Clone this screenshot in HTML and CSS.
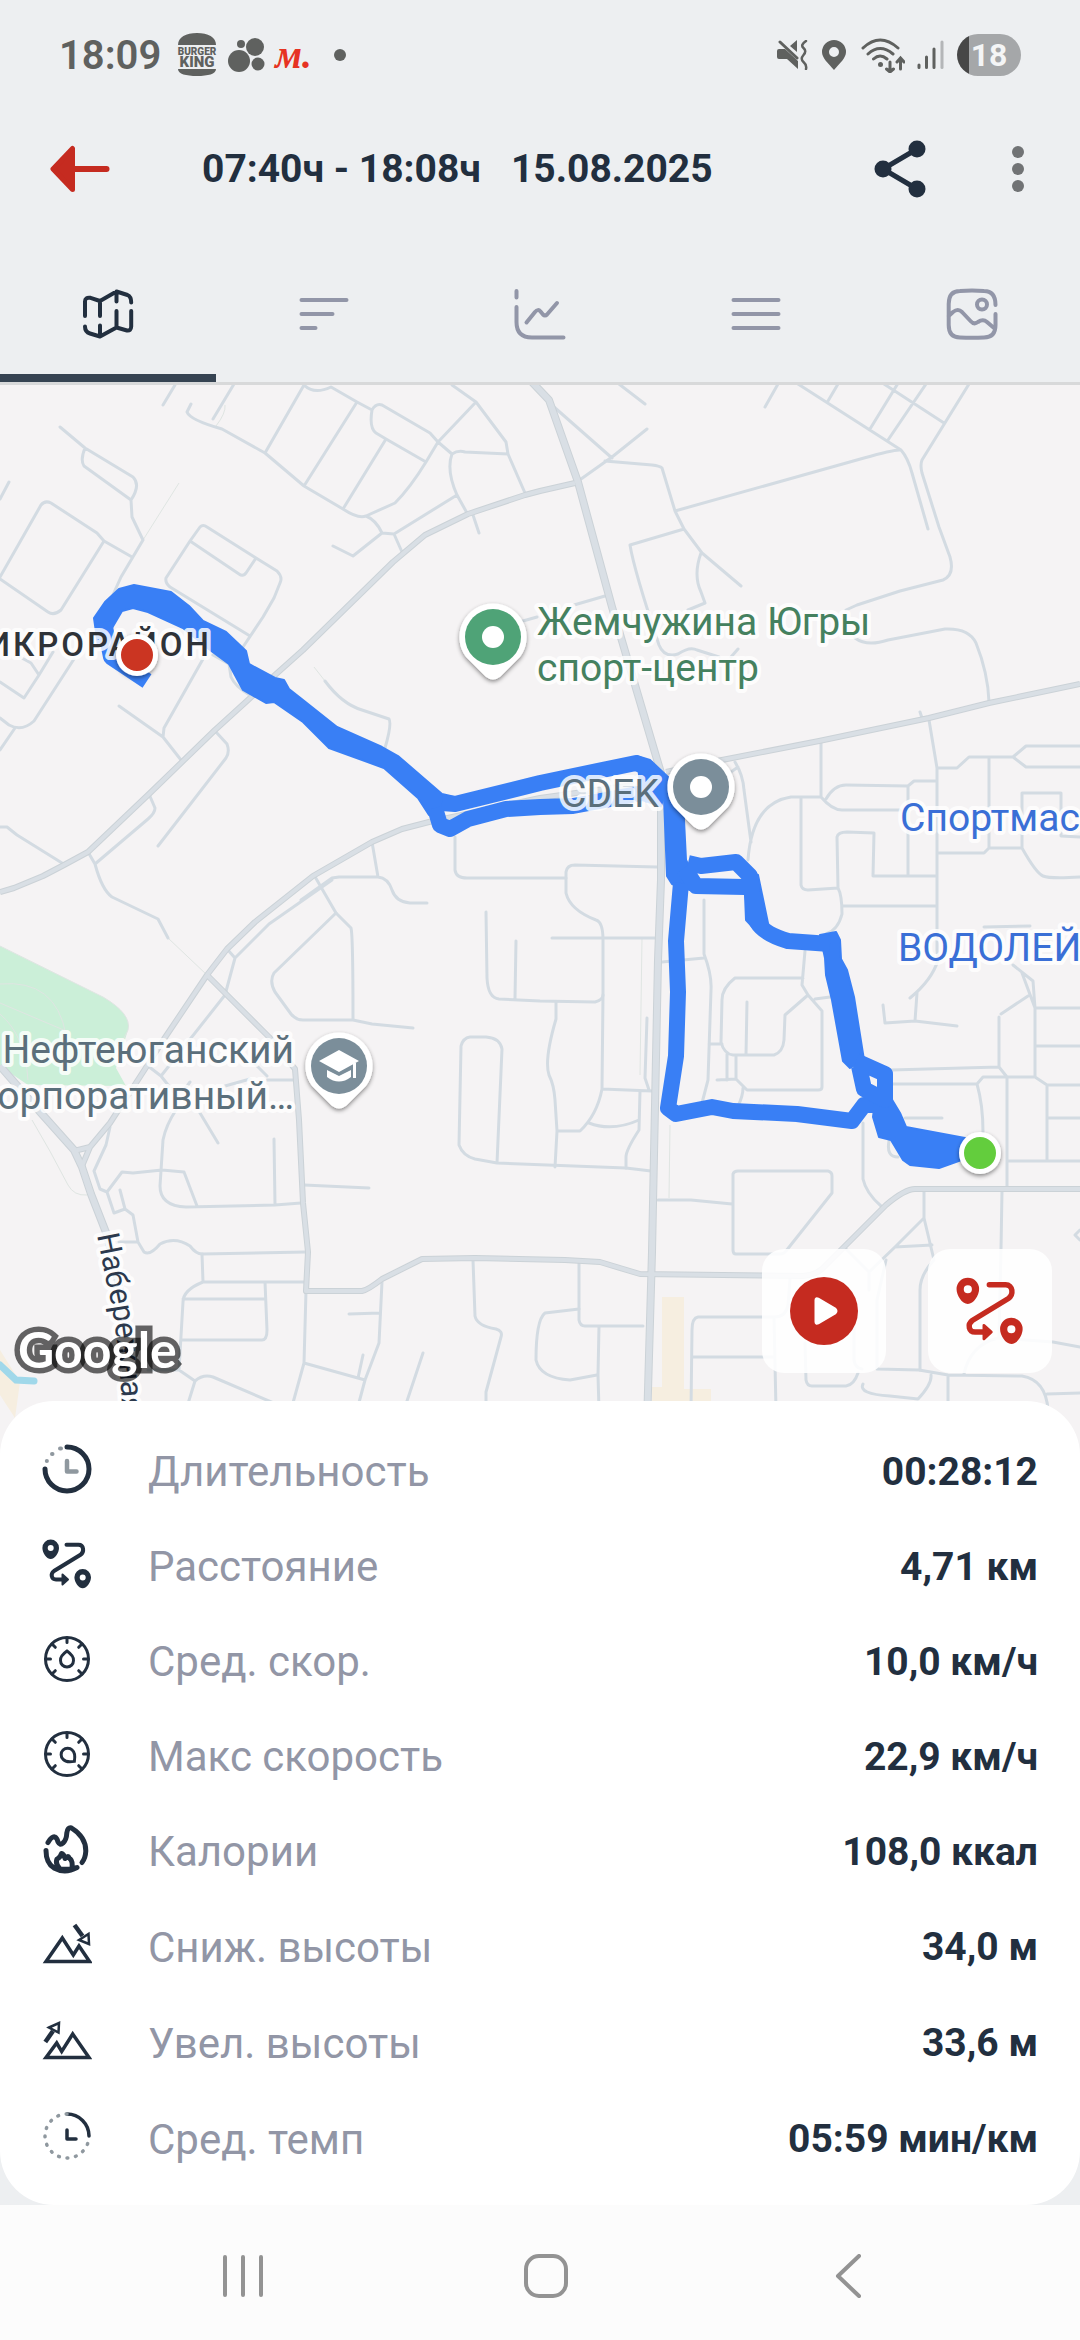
FILE: index.html
```html
<!DOCTYPE html>
<html lang="ru">
<head>
    <meta charset="UTF-8">
    <meta name="viewport" content="width=device-width, initial-scale=1">
    <title>Тренировка 15.08.2025</title>
    <link rel="stylesheet" href="styles.css">
</head>
<body>
    <svg class="sprite" aria-hidden="true">
        <symbol id="icon-route" viewBox="0 0 50 50">
            <path fill="currentColor" fill-rule="evenodd" d="M8.700 0.600a8.300 8.300 0 0 1 8.300 8.300c0 4.600-4 11-8.300 11S0.400 13.500 0.400 8.900A8.300 8.300 0 0 1 8.700 0.600zM8.700 6a3 3 0 1 0 0 6 3 3 0 0 0 0-6z"/>
            <path fill="currentColor" fill-rule="evenodd" d="M40.700 30a8.300 8.300 0 0 1 8.300 8.300c0 4.600-4 11-8.300 11s-8.300-6.400-8.300-11A8.300 8.300 0 0 1 40.700 30zM40.700 35.400a3 3 0 1 0 0 6 3 3 0 0 0 0-6z"/>
            <path fill="none" stroke="currentColor" stroke-width="4" stroke-linecap="round" d="M24.500 5.700H36.500C42 5.700 42.500 13 38.500 15.800L12 32C8 35 9.500 40.500 14 40.500H22"/>
            <path fill="currentColor" stroke="currentColor" stroke-width="2" stroke-linejoin="round" d="M20.500 35.500L26 40.500L20.500 45.500z"/>
        </symbol>
        <symbol id="icon-gauge" viewBox="0 0 50 50">
            <g fill="none" stroke="currentColor" stroke-width="3" stroke-linecap="round">
                <circle cx="25" cy="25" r="21.500"/>
                <path d="M25 4V8.500M4 25H8.500M46 25H41.500M10 10L13.300 13.300M40 10L36.700 13.300M10 40L13.300 36.700M40 40L36.700 36.700"/>
            </g>
        </symbol>
    </svg>

    <header class="status-bar">
        <div class="status-left">
            <time class="clock">18:09</time>
            <svg width="40" height="44" viewBox="0 0 40 44" fill="#5f615f" aria-hidden="true">
                <path d="M1 12C1 4 9 0 20 0s19 4 19 12z"/>
                <path d="M1 36H39C39 41 31 43 20 43S1 41 1 36z"/>
                <text class="bk" x="20" y="22" font-size="10">BURGER</text>
                <text class="bk" x="20" y="34" font-size="15">KING</text>
            </svg>
            <svg width="38" height="38" viewBox="0 0 38 38" fill="#5f615f" aria-hidden="true">
                <circle cx="14" cy="8" r="4"/>
                <circle cx="28" cy="11" r="9"/>
                <circle cx="12" cy="25" r="11"/>
                <circle cx="31" cy="28" r="6.500"/>
            </svg>
            <span class="m-logo">м.</span>
            <span class="dot"></span>
        </div>
        <div class="status-right">
            <svg width="32" height="30" viewBox="0 0 32 30" fill="#5f615f" aria-hidden="true">
                <path d="M0 11Q0 9 2 9H8L21 21V29L10 19H2Q0 19 0 17zM13 6L20 0V12z"/>
                <path d="M3 2L20 18" stroke="#5f615f" stroke-width="3" stroke-linecap="round"/>
                <path d="M29 1Q23 5 26.500 8T26.500 15T26.500 22T29 29" fill="none" stroke="#5f615f" stroke-width="2.500" stroke-linecap="round"/>
            </svg>
            <svg width="28" height="30" viewBox="0 0 28 30" aria-hidden="true">
                <path fill="#5f615f" fill-rule="evenodd" d="M13 0a12 12 0 0 1 12 12c0 6-6 11-12 18C7 23 1 18 1 12A12 12 0 0 1 13 0zM13 7a5 5 0 1 0 0 10 5 5 0 0 0 0-10z"/>
            </svg>
            <svg width="44" height="36" viewBox="0 0 44 36" fill="none" stroke="#5f615f" stroke-width="3" stroke-linecap="round" aria-hidden="true">
                <path d="M2 11Q19 -5 37 11M7 17Q19 6 32 17M12.500 22Q19 16 26 22M29 25V35M25.500 32L29 35L32.500 32M39.500 32V22M36 25L39.500 21L43 25"/>
                <circle cx="19.500" cy="27.500" r="2.500" fill="#5f615f" stroke="none"/>
            </svg>
            <svg width="28" height="30" viewBox="0 0 28 30" stroke="#5f615f" stroke-width="3" stroke-linecap="round" aria-hidden="true">
                <path d="M2 25V27.500M9.500 17V27.500M17 9V27.500"/>
                <path d="M25 2V27.500" stroke="#b4b6b8"/>
            </svg>
            <span class="battery">18</span>
        </div>
    </header>

    <div class="toolbar">
        <button class="icon-btn back" aria-label="Назад">
            <svg width="60" height="48" viewBox="0 0 60 48" aria-hidden="true">
                <path d="M24 24H56.500" stroke="#c52b20" stroke-width="6" stroke-linecap="round"/>
                <path d="M22.500 3.500V44.500L3 24z" fill="#c52b20" stroke="#c52b20" stroke-width="5" stroke-linejoin="round"/>
            </svg>
        </button>
        <h1 class="title"><span>07:40ч - 18:08ч</span><span>15.08.2025</span></h1>
        <button class="icon-btn share" aria-label="Поделиться">
            <svg width="52" height="60" viewBox="0 0 52 60" fill="#222f3f" aria-hidden="true">
                <path d="M43 10L9 30L43 50" fill="none" stroke="#222f3f" stroke-width="5"/>
                <circle cx="43" cy="10" r="8.500"/>
                <circle cx="9" cy="30" r="8.500"/>
                <circle cx="43" cy="50" r="8.500"/>
            </svg>
        </button>
        <button class="icon-btn more" aria-label="Ещё">
            <svg width="12" height="48" viewBox="0 0 12 48" fill="#717375" aria-hidden="true">
                <circle cx="6" cy="7" r="6"/>
                <circle cx="6" cy="24" r="6"/>
                <circle cx="6" cy="41" r="6"/>
            </svg>
        </button>
    </div>

    <nav class="tabs">
        <button class="tab active" aria-label="Карта">
            <svg viewBox="0 0 52 52" aria-hidden="true">
                <path d="M3 28V13.500Q3 9 8.500 9.800L18 13L34.500 3.500L45.500 7Q49.200 8.500 49.200 14.500M49.200 23V38.500Q49 43 45 42.500L34.500 39.500L18 48.500L8 45.500Q3 44 3 38.500M18 13V28M34.500 3.500V13.500M18 37.500V48.500M34.500 23V39.500"/>
            </svg>
        </button>
        <button class="tab" aria-label="Круги">
            <svg viewBox="0 0 52 52" aria-hidden="true"><path d="M3.500 12H48.500M3.500 26H34.500M3.500 40H17.500"/></svg>
        </button>
        <button class="tab" aria-label="Графики">
            <svg viewBox="0 0 52 52" aria-hidden="true"><path d="M2.500 3V9.500M2.500 19V34Q2.500 49.500 18 49.500H49.500M12.500 34.500L21 24Q24 20.500 26.500 23.500L29 26.500Q31 28.500 33 26.500L43 15"/></svg>
        </button>
        <button class="tab" aria-label="Список">
            <svg viewBox="0 0 52 52" aria-hidden="true"><path d="M3.500 12H48.500M3.500 26H48.500M3.500 40H48.500"/></svg>
        </button>
        <button class="tab" aria-label="Фото">
            <svg viewBox="0 0 52 52" aria-hidden="true">
                <path d="M49.500 17Q49.500 3 38 3Q26 2 14 3Q2.700 3 2.700 16V37Q2.700 49.500 14 49.500Q26 50 38 49.500Q49.500 49.500 49.500 37V26M2.700 28L7 24Q12 20 16 24L24.500 33Q28 37 32 34Q37 30.500 41 34L48 40"/>
                <circle cx="36" cy="16.500" r="5"/>
            </svg>
        </button>
    </nav>

    <main class="content">
        <section class="map" aria-label="Маршрут на карте">
            <svg class="map-canvas" viewBox="0 385 1080 1070" preserveAspectRatio="xMidYMin slice">
                <defs>
                    <filter id="drop" x="-30%" y="-30%" width="160%" height="160%">
                        <feDropShadow dx="0" dy="2" stdDeviation="2" flood-color="#000" flood-opacity="0.45"/>
                    </filter>
                    <path id="embankment" d="M97 1235L106 1280Q121 1340 123 1440"/>
                    <path id="pin" d="M0 -33.500A33.500 33.500 0 0 1 27 20L7.500 39.500Q0 45.500 -7.500 39.500L-27 20A33.500 33.500 0 0 1 0 -33.500z"/>
                </defs>

                <!-- Парк, вода, застройка -->
                <path class="park" d="M0 946L103 997Q132 1014 128 1030L116 1068L126 1086L28 1085L0 1066z"/>
                <path class="sand" d="M0 1350L20 1382L15 1418L0 1395zM662 1297H684V1389H711V1460H652V1387H662z"/>
                <path class="water" d="M0 1365L16 1380L34 1381"/>
                <path class="trail" d="M325 681L314 667M143 540L179 483M216 426Q226 413 225 405M0 946L103 997Q132 1014 128 1030L120 1046M0 984Q56 979 66 1035M0 1003L66 1031M0 1014Q25 1035 28 1080M168 938L207 975M32 1120Q50 1150 68 1185Q74 1196 87 1195M642 938L640 1075M670 1125L669 1198"/>

                <!-- Мелкие улицы -->
                <path class="street" d="M175 385L163 405M234 384L213 419M191 404L187 412Q190 420 222 429L265 453L304 486L343 509Q358 519 366 516L395 503Q410 488 426 462L438 442L476 402M304 385L265 453M304 385Q314 395 331 387L357 402L372 410M357 402L304 486M372 410Q376 403 382 405L430 433L438 442L452 454Q458 450 465 452L508 454M372 410Q369 428 376 433L386 439L426 462M386 439L343 509M452 385L476 402L506 442L508 454L525 493M452 454Q446 470 457 495L467 513M473 515L479 533M457 495L394 534L382 533L353 556L333 546M366 516Q376 520 382 533M394 534L402 552"/>
                <path class="street" d="M60 427L85 448L133 477Q141 485 131 500L132 517L143 540L121 577L112 597M85 448Q80 460 84 466L131 500M9 482L0 499M0 577L41 505Q45 500 51 503L97 533L104 541L61 610Q54 616 48 612L0 579M104 541L132 557M190 541L200 527Q203 524 207 527L256 558L277 571Q283 577 280 583L274 598L263 617L243 647M190 541L166 578Q165 583 170 587L250 636M190 541L239 574Q243 577 246 573L256 558"/>
                <path class="street" d="M20 657L31 663L39 675L53 652M39 675L24 698L0 682M74 659L34 721Q22 732 9 725L0 718M15 728L0 750M119 706L163 737L181 760M203 659L164 728L163 737M213 655L229 664L231 677Q235 686 248 694M216 732L227 744Q230 752 226 758L158 846M149 794L155 808Q155 813 148 819L95 864M88 852L95 864Q102 890 112 897L158 919L168 938M0 827L7 827L17 835L62 863M325 681Q342 704 362 710L389 719Q392 724 385 748M372 842L378 877M455 837V870Q456 878 467 878H566M301 900L332 878L339 877H378Q388 878 392 890Q396 902 410 903H427M314 875L336 913L351 928Q353 935 353 1019M523 621L537 617"/>
                <path class="street" d="M332 880L269 924L235 958L225 995L161 1076L148 1066M161 1076L180 1100M227 949L235 958M336 913L274 973Q269 981 275 992L291 1014Q296 1020 303 1020H353L372 1024L413 1028M486 912L487 978Q488 998 499 999L540 1001L595 1002Q603 1000 603 995V940Q603 922 596 920Q570 910 566 893V872Q567 865 575 865L657 867M516 941L515 998M461 1046Q463 1038 470 1037H486Q500 1038 502 1049L497 1163M461 1046L459 1145Q463 1156 475 1159L497 1163L626 1168L651 1171M304 1185L369 1188M274 1139L275 1205M301 1203L275 1205L186 1207Q160 1206 160 1186L163 1140Q166 1125 176 1110M107 1192L122 1172L133 1173L162 1170L184 1172L197 1206M110 1127L106 1145L94 1171L100 1189L107 1192L114 1213L125 1209L120 1190M125 1209L133 1215L138 1242L144 1252Q150 1256 160 1244Q175 1236 190 1246Q196 1254 202 1254L306 1252M119 1242L138 1242"/>
                <path class="street" d="M202 1254L203 1282Q183 1290 183 1302L179 1370M203 1282H305M183 1299H265M265 1282L267 1330Q267 1340 262 1340H181M148 1370H179L195 1381L186 1410M195 1381Q203 1374 213 1377L290 1410M306 1291L304 1363L291 1410M304 1363L365 1380M382 1282L379 1343L365 1380L357 1410M363 1355L358 1378M349 1314L380 1313M423 1353L404 1410M473 1260L475 1316Q477 1326 496 1329Q503 1331 501 1337L486 1392V1410M579 1309L545 1313Q536 1320 536 1360Q540 1378 570 1380L597 1375M267 1080H293M225 1086L250 1079M255 1064L267 1076M200 1113L218 1143M190 1082L184 1090"/>
                <path class="street" d="M619 384L645 404M554 407L612 458M581 479L612 457L647 429M605 461L652 465Q660 466 662 468L675 511L684 529L702 553L741 586M675 511L864 458Q895 449 901 450Q908 458 912 473L928 529M798 384L901 450M828 401L838 384M778 384L765 407M870 429L900 380M888 440L926 384M884 384L944 423M969 384L922 460Q920 465 922 473L939 527L950 557Q955 575 943 580L900 591L857 605L846 610M684 529L630 545Q634 570 659 645Q664 658 678 654Q690 646 697 650L719 657M701 553Q693 575 701 592L705 603L688 610M731 657L738 649M574 605L605 596M855 638Q867 647 888 640L945 629Q969 628 976 643Q988 673 989 702M920 712L922 718"/>
                <path class="street" d="M929 720L937 768V950L938 960Q932 980 910 998M937 768H957L969 757H1013L1026 746H1080M1013 757L1026 767H1080M989 757V848L984 853H937M989 848H1022V793H1061V836L1080 837M1022 848Q1036 873 1043 876Q1050 879 1080 877M821 743V797H791Q752 803 748 860M735 762Q743 775 744 790L751 842M731 772L738 767M826 799Q834 785 846 785L908 786L914 781H937M821 797Q832 810 842 810H900M908 786V876M801 797V885Q802 890 808 890L838 888L837 837Q838 832 847 832L874 833L873 876H937M838 888Q842 895 842 914Q838 930 826 934M842 906H937"/>
                <path class="street" d="M552 938H657M704 900V954Q712 975 711 990L708 1080L702 1103M662 962L704 958M803 978H735Q722 988 722 1000L721 1042Q724 1054 733 1055H774Q783 1052 784 1040L785 1015L808 995L802 985L805 951M747 1002L746 1055M808 995L822 1011V1087Q822 1090 818 1090H747L736 1079L717 1080M736 1055V1079M727 1054V1080M709 1044H722M743 1088Q743 1096 738 1106M815 999L830 997M647 1018L645 1078L649 1090M603 995L602 1089L652 1091M602 1089Q597 1115 580 1131H557M556 1002V1019Q544 1060 549 1075Q554 1085 555 1100L557 1131L555 1167M640 1091L639 1130Q626 1150 626 1157V1168M589 1123Q612 1132 639 1120M658 1200H691L732 1204M733 1250V1174Q734 1171 738 1171H828Q832 1172 832 1176V1193L786 1251Q784 1254 780 1254H736Q733 1254 733 1250z"/>
                <path class="street" d="M863 1123V1179Q866 1193 881 1206M889 1141Q886 1157 898 1157M905 1118H942M891 1084H977Q983 1105 983 1132M891 1070L999 1067L1007 1077V1186M977 1084L983 1077H1035L1047 1085H1080M1047 1085V1161M1007 1161H1080M1047 1118H1080M999 1017V1067M1035 1077V1008L1033 981L1013 965M1035 1008H1080M1035 1046H1080M1035 1008L1022 973M1001 1014L1028 996M984 927L1030 926M883 1005L885 1023L915 1021L957 1026M917 993L915 1021M1002 1191L1001 1249L999 1338M924 1191V1218L895 1247L869 1272V1290M924 1218L934 1260Q920 1275 920 1290V1370M895 1247L932 1245M846 1249L869 1272M579 1262V1320Q580 1326 585 1326H643M599 1326L598 1375L599 1410M790 1279L788 1305Q786 1317 774 1317H698Q692 1318 692 1330L691 1410M692 1357H774M774 1317L776 1410"/>
                <path class="street" d="M805 1343L806 1380Q807 1386 812 1386H846Q854 1385 858 1373M886 1260L877 1300V1369M854 1320V1360Q855 1368 862 1369M877 1369L919 1370L948 1375L1022 1376Q1046 1380 1048 1410M948 1375V1410M931 1375Q932 1384 918 1399L890 1396Q858 1394 863 1384M1047 1394L1080 1393M964 1374Q970 1345 998 1338L1053 1342L1080 1347M1080 1240L1075 1235L1080 1230"/>

                <!-- Магистрали: сначала кант, поверх заливка -->
                <g class="road-edge">
                    <path id="ring" d="M575 483L540 491L525 495L468 514L425 535L393 562L303 650L275 675L248 700L215 730L149 794L88 852L64 865L43 876L14 888L0 892"/>
                    <path id="south" d="M655 782L540 798L429 822L402 829L372 842L313 876L255 922L227 949L207 975L164 1039L145 1069L110 1123L90 1147L74 1151M90 1147L82 1166M207 975L269 1037L295 1069L299 1120L303 1203L308 1252L306 1291H362Q368 1290 382 1279L422 1259L475 1258L565 1260L600 1262L640 1274L803 1276Q815 1275 822 1269L886 1205Q905 1189 915 1189H1080"/>
                    <path id="east" d="M666 772L722 760L819 741L929 718L989 703L1080 684"/>
                </g>
                <path class="road-edge wide" d="M530 380L549 400L578 482L612 607L661 773V880L658 960L652 1252L646 1460M0 1066L41 1113L74 1150L82 1167L91 1194L107 1235L120 1290L130 1350L135 1460"/>
                <g class="road">
                    <use href="#ring"/>
                    <use href="#south"/>
                    <use href="#east"/>
                </g>
                <path class="road wide" d="M530 380L549 400L578 482L612 607L661 773V880L658 960L652 1252L646 1460M0 1066L41 1113L74 1150L82 1167L91 1194L107 1235L120 1290L130 1350L135 1460"/>

                <!-- Маршрут -->
                <g class="track">
                    <path class="track-fill" d="M94 618L105 602L119 589L134 585L171 592L189 606L203 621L226 632L246 651L249 664L275 678L284 680L289 689L303 700L337 727L382 747L398 756L442 794L455 797L442 812L429 815L418 798L384 768L329 748L303 722L274 702L266 703L243 690L229 664L210 650L183 628L148 612L133 608L122 611L112 628L110 646H98z"/>
                    <path class="track-fill" d="M637 756L650 760L668 777L683 800L686 860L696 880L690 890L672 884L667 876L664 798L640 784zM820 935L836 932L840 940L841 959L847 970L854 997L864 1060L850 1068L843 1061L832 1000L826 975L825 958zM750 872L758 875L769 928L760 935L746 920L745 895zM876 1094L891 1098L900 1113L906 1127L965 1138L981 1153L939 1168L910 1165L903 1160L891 1140L879 1137L873 1117z"/>
                    <path d="M104 622L111 657L147 681M442 803L455 804L540 783L636 763L650 769M435 808L440 825L450 829L468 819L506 809L540 807L573 806L643 793L664 800"/>
                    <path d="M688 863L701 866L736 862L750 876L753 900L757 922Q764 934 788 941L830 944M684 868L696 886L745 887M681 883L676 941L678 992L676 1056L668 1108L676 1114L712 1107L733 1111L797 1114L852 1121L864 1105H884"/>
                    <path class="thin" d="M856 1061L885 1074V1100L864 1089L859 1066"/>
                </g>

                <text class="district" x="212" y="656">ИКРОРАЙОН</text>
                <text class="poi green" x="537" y="635">Жемчужина Югры</text>
                <text class="poi green" x="537" y="681">спорт-центр</text>
                <text class="poi gray" x="561" y="807">CDEK</text>
                <text class="poi blue" x="900" y="831">Спортмас</text>
                <text class="poi blue" x="898" y="961">ВОДОЛЕЙ</text>
                <text class="poi gray end" x="294" y="1063">Нефтеюганский</text>
                <text class="poi gray end" x="294" y="1109">орпоративный…</text>
                <text class="street-name"><textPath href="#embankment">Набережная</textPath></text>

                <!-- Метки мест -->
                <g transform="translate(493 637)">
                    <use href="#pin" fill="#fff" filter="url(#drop)"/>
                    <circle r="28" fill="#4fa377"/>
                    <circle r="11" fill="#fff"/>
                </g>
                <g transform="translate(701 787)">
                    <use href="#pin" fill="#fff" filter="url(#drop)"/>
                    <circle r="28" fill="#7b8e9a"/>
                    <circle r="11" fill="#fff"/>
                </g>
                <g transform="translate(339 1066)">
                    <use href="#pin" fill="#fff" filter="url(#drop)"/>
                    <circle r="28" fill="#7b8e9a"/>
                    <path fill="#fff" d="M0 -16L20 -5L0 6L-20 -5zM-12 4L0 10L12 4V11Q0 20 -12 11zM14 -3H17V12H14z"/>
                </g>

                <!-- Старт и финиш -->
                <g stroke="#fff" stroke-width="5">
                    <circle cx="137" cy="655" r="18.500" fill="#cb3420" filter="url(#drop)"/>
                    <circle cx="980" cy="1153" r="18.500" fill="#64cd3c" filter="url(#drop)"/>
                </g>

                <text class="google" x="18" y="1368">Google</text>
            </svg>

            <div class="map-actions">
                <button class="fab" aria-label="Воспроизвести">
                    <svg viewBox="0 0 68 68" aria-hidden="true">
                        <circle cx="34" cy="34" r="34" fill="#c52b20"/>
                        <path d="M26 23V45Q26 47 28 46L45 36Q47 34 45 32L28 22Q26 21 26 23z" fill="#fff" stroke="#fff" stroke-width="3" stroke-linejoin="round"/>
                    </svg>
                </button>
                <button class="fab" aria-label="Маршрут">
                    <svg viewBox="0 0 50 50" aria-hidden="true"><use href="#icon-route"/></svg>
                </button>
            </div>
        </section>

        <dl class="stats">
            <div class="stat">
                <dt>
                    <svg viewBox="0 0 50 50" fill="none" stroke-linecap="round" stroke-linejoin="round" aria-hidden="true">
                        <path d="M25 3A22 22 0 1 1 3 25" stroke="currentColor" stroke-width="5"/>
                        <path d="M25 17V27.500H34.500" stroke="#8f989f" stroke-width="4.500"/>
                        <path d="M18 4.500h1M10 10h.5M4.800 17h.1" stroke="#8f989f" stroke-width="4"/>
                    </svg>
                    Длительность
                </dt>
                <dd>00:28:12</dd>
            </div>
            <div class="stat">
                <dt>
                    <svg viewBox="0 0 50 50" aria-hidden="true"><use href="#icon-route"/></svg>
                    Расстояние
                </dt>
                <dd>4,71 км</dd>
            </div>
            <div class="stat">
                <dt>
                    <svg viewBox="0 0 50 50" aria-hidden="true">
                        <use href="#icon-gauge"/>
                        <path d="M25 17Q18 22 18.500 26.500A6.500 6.500 0 0 0 31.500 26.500Q32 22 25 17z" fill="none" stroke="currentColor" stroke-width="3"/>
                    </svg>
                    Сред. скор.
                </dt>
                <dd>10,0 км/ч</dd>
            </div>
            <div class="stat">
                <dt>
                    <svg viewBox="0 0 50 50" aria-hidden="true">
                        <use href="#icon-gauge"/>
                        <path transform="rotate(135 26 26)" d="M26 17Q19 22 19.500 26.500A6.500 6.500 0 0 0 32.500 26.500Q33 22 26 17z" fill="none" stroke="currentColor" stroke-width="3"/>
                    </svg>
                    Макс скорость
                </dt>
                <dd>22,9 км/ч</dd>
            </div>
            <div class="stat">
                <dt>
                    <svg viewBox="0 0 50 50" fill="none" stroke="currentColor" stroke-width="5" stroke-linecap="round" stroke-linejoin="round" aria-hidden="true">
                        <path d="M6 18.500Q10 12 13 13Q15 14 16 18Q18 22 21 19Q24.500 16 24.800 9Q25.500 3 29.500 4Q44 13 43.800 27Q43.500 34 40 38.500"/>
                        <path d="M4 26.500Q4 39 12 44Q23 50 35 43.500Q28 46 18 45Q13 40 15 35Q18 34 19.500 29.500Q22 30 23 34.500Q26 31 27 34Q31 36 30 44"/>
                    </svg>
                    Калории
                </dt>
                <dd>108,0 ккал</dd>
            </div>
            <div class="stat tall">
                <dt>
                    <svg viewBox="0 0 50 50" fill="none" stroke="currentColor" stroke-width="3.500" aria-hidden="true">
                        <path d="M4 42.500L20.300 19L31.300 36L37 27L47.500 42.500z"/>
                        <path d="M32.500 6L40.500 17" stroke-width="4.500"/>
                        <path d="M37 21L46.500 15L47 25z" stroke-width="2.500"/>
                    </svg>
                    Сниж. высоты
                </dt>
                <dd>34,0 м</dd>
            </div>
            <div class="stat tall">
                <dt>
                    <svg viewBox="0 0 50 50" fill="none" stroke="currentColor" stroke-width="3.500" aria-hidden="true">
                        <path d="M4 42.500L14.700 28L19.700 36.500L30.700 19L47 42.500z"/>
                        <path d="M3.300 27L11 16" stroke-width="4.500"/>
                        <path d="M7 12.500L17 8L16.500 17.500z" stroke-width="2.500"/>
                    </svg>
                    Увел. высоты
                </dt>
                <dd>33,6 м</dd>
            </div>
            <div class="stat tall">
                <dt>
                    <svg viewBox="0 0 50 50" fill="none" stroke-linecap="round" stroke-linejoin="round" aria-hidden="true">
                        <path d="M25 3A22 22 0 0 1 47 25" stroke="currentColor" stroke-width="3.500"/>
                        <path d="M47 25A22 22 0 1 1 25 3" pathLength="120" stroke="#8f989f" stroke-width="3.500" stroke-dasharray="1 9" stroke-dashoffset="-9"/>
                        <path d="M25 19V28H34" stroke="currentColor" stroke-width="3.500"/>
                    </svg>
                    Сред. темп
                </dt>
                <dd>05:59 мин/км</dd>
            </div>
        </dl>
    </main>

    <footer class="nav-bar">
        <button class="icon-btn" aria-label="Недавние">
            <svg width="44" height="44" viewBox="0 0 44 44" aria-hidden="true"><path d="M4 3V41M22 3V41M40 3V41"/></svg>
        </button>
        <button class="icon-btn" aria-label="Домой">
            <svg width="44" height="44" viewBox="0 0 44 44" aria-hidden="true"><rect x="2" y="2" width="40" height="40" rx="13"/></svg>
        </button>
        <button class="icon-btn" aria-label="Назад">
            <svg width="44" height="44" viewBox="0 0 44 44" aria-hidden="true"><path d="M32 2L11 22L32 42"/></svg>
        </button>
    </footer>
</body>
</html>
```

FILE: styles.css
```css
* {
    box-sizing: border-box;
}
html, body {
    margin: 0;
    padding: 0;
}
body {
    min-height: 100vh;
    display: flex;
    flex-direction: column;
    background: #edeff1;
    color: #222f3f;
    font-family: Roboto, "Liberation Sans", sans-serif;
}
button {
    margin: 0;
    padding: 0;
    border: none;
    background: none;
    color: inherit;
    font: inherit;
    cursor: pointer;
}
svg {
    display: block;
    flex: none;
}
.sprite {
    position: absolute;
    width: 0;
    height: 0;
}

/* Строка состояния */
.status-bar {
    height: 110px;
    padding: 0 59px;
    display: flex;
    align-items: center;
    justify-content: space-between;
}
.status-left, .status-right {
    display: flex;
    align-items: center;
    gap: 12px;
}
.status-left {
    gap: 10px;
}
.clock {
    margin-right: 6px;
    font-size: 40px;
    font-weight: 600;
    color: #5f615f;
}
.bk {
    font-weight: 900;
    text-anchor: middle;
}
.m-logo {
    font-family: "Liberation Serif", serif;
    font-size: 39px;
    line-height: 44px;
    font-weight: 700;
    font-style: italic;
    color: #e63323;
}
.dot {
    width: 12px;
    height: 12px;
    margin-left: 12px;
    border-radius: 50%;
    background: #5f615f;
}
.battery {
    width: 64px;
    height: 42px;
    border-radius: 21px;
    background: linear-gradient(90deg, #474747 12px, #a5a7a9 12px);
    color: #f4f5f6;
    font-size: 32px;
    line-height: 42px;
    font-weight: 700;
    text-align: center;
}

/* Шапка */
.toolbar {
    height: 118px;
    padding: 0 56px 0 50px;
    display: flex;
    align-items: center;
}
.icon-btn {
    display: flex;
    align-items: center;
    justify-content: center;
}
.title {
    flex: 1;
    margin: 0 0 0 92px;
    display: flex;
    gap: 30px;
    font-size: 39px;
    line-height: 48px;
    font-weight: 700;
    white-space: pre;
}
.share {
    margin-right: 86px;
}

/* Вкладки */
.tabs {
    display: grid;
    grid-template-columns: repeat(5, 1fr);
    height: 157px;
    border-bottom: 3px solid #d8d9da;
}
.tab {
    display: flex;
    align-items: center;
    justify-content: center;
    padding-top: 26px;
    border-bottom: 8px solid transparent;
    color: #9296a8;
}
.tab.active {
    border-bottom-color: #364352;
    color: #222f3f;
}
.tab svg {
    width: 52px;
    height: 52px;
    fill: none;
    stroke: currentColor;
    stroke-width: 4;
    stroke-linecap: round;
    stroke-linejoin: round;
}

/* Карта */
.content {
    flex: 1;
    display: flex;
    flex-direction: column;
}
.map {
    flex: 1;
    min-height: 600px;
    position: relative;
    overflow: hidden;
    background: #f5f3f4;
}
.map-canvas {
    position: absolute;
    inset: 0;
    width: 100%;
    height: 100%;
}
.park {
    fill: #cbefd8;
}
.sand {
    fill: #f6eee0;
}
.water {
    fill: none;
    stroke: #a0d8ea;
    stroke-width: 7;
    stroke-linecap: round;
}
.trail, .street, .road, .road-edge {
    fill: none;
    stroke-linejoin: round;
}
.trail {
    stroke: #dfe5e2;
    stroke-width: 1;
}
.street {
    stroke: #d3dbe2;
    stroke-width: 3;
    stroke-linecap: round;
}
.road-edge {
    stroke: #cbd2d7;
    stroke-width: 6;
}
.road {
    stroke: #d9dfe5;
    stroke-width: 4;
}
.road-edge.wide {
    stroke-width: 8;
}
.road.wide {
    stroke-width: 6;
}
.track {
    fill: none;
    stroke: #397ff5;
    stroke-width: 16;
    stroke-linejoin: round;
}
.track .track-fill {
    fill: #397ff5;
    stroke-width: 2;
}
.poi, .district, .street-name {
    paint-order: stroke;
    stroke: #ffffffd0;
    stroke-width: 8px;
    stroke-linejoin: round;
}
.poi {
    font-size: 39px;
}
.green {
    fill: #45815f;
}
.gray {
    fill: #5b6f7b;
}
.blue {
    fill: #3a6fd6;
}
.end {
    text-anchor: end;
}
.district {
    font-size: 33px;
    font-weight: 500;
    letter-spacing: 3px;
    text-anchor: end;
    fill: #2f3338;
}
.street-name {
    font-size: 31px;
    fill: #2c394d;
}
.google {
    font-family: Lato, sans-serif;
    font-size: 50px;
    font-weight: 700;
    fill: #fff;
    stroke: #00000099;
    stroke-width: 11px;
    paint-order: stroke;
}
.map-actions {
    position: absolute;
    right: 28px;
    bottom: 82px;
    display: flex;
    gap: 42px;
}
.fab {
    width: 124px;
    height: 124px;
    display: flex;
    align-items: center;
    justify-content: center;
    border-radius: 22px;
    background: rgba(255, 255, 255, 0.88);
    color: #c52b20;
}
.fab svg {
    width: 68px;
    height: 68px;
}

/* Показатели */
.stats {
    position: relative;
    margin: -54px 0 0;
    padding: 23px 42px 18px;
    border-radius: 54px;
    background: #fff;
}
.stat {
    height: 95px;
    display: flex;
    align-items: center;
    justify-content: space-between;
}
.stat.tall {
    height: 96px;
}
.stat dt {
    display: flex;
    align-items: center;
    gap: 56px;
    font-size: 42px;
    color: #9296a6;
}
.stat dt svg {
    width: 50px;
    height: 56px;
    padding-bottom: 6px;
    color: #222f3f;
}
.stat dd {
    margin: 0;
    font-size: 39px;
    font-weight: 700;
}

/* Системная навигация */
.nav-bar {
    height: 135px;
    padding: 0 80px 0 92px;
    display: grid;
    grid-template-columns: repeat(3, 1fr);
    background: #fcfcfc;
}
.nav-bar svg {
    margin-top: 7px;
    fill: none;
    stroke: #939393;
    stroke-width: 4;
    stroke-linecap: round;
    stroke-linejoin: round;
}
```
